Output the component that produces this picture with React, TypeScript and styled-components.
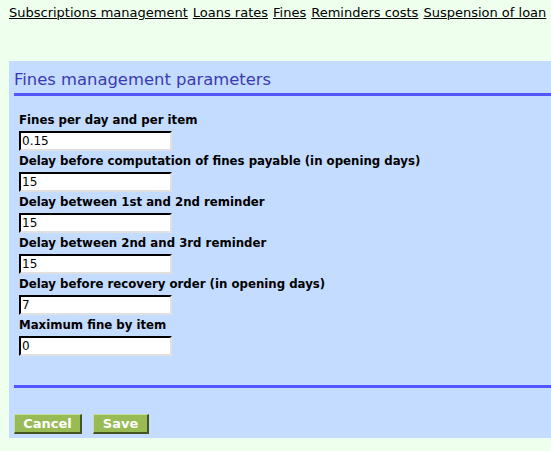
import styled, { createGlobalStyle } from "styled-components"

const GlobalStyle = createGlobalStyle`
	html, body {
		margin: 0;
		padding: 0;
		overflow: hidden;
		background-color: #eeffee;
	}
	body {
		font-family: "DejaVu Sans", Verdana, sans-serif;
	}
`

const Page = styled.div`
	padding: 5px 0 0 9px;
	width: 600px;
`

const Tabs = styled.nav`
	display: flex;
	gap: 5px;
	white-space: nowrap;
	font-size: 13px;
	line-height: 16px;
`

const Tab = styled.a`
	color: black;
	text-decoration: underline;
`

const Panel = styled.form`
	margin-top: 40px;
	background-color: #c4dcff;
	padding: 8px 0 4px 5px;
`

const Title = styled.h2`
	margin: 0;
	color: #3b3bb0;
	font-size: 16.4px;
	font-weight: normal;
	line-height: 22px;
	padding-bottom: 2px;
	border-bottom: 3px solid #5555ff;
`

const Fields = styled.div`
	display: flex;
	flex-direction: column;
	padding: 17px 0 26px 5px;
`

const Label = styled.label`
	font-size: 11.75px;
	font-weight: bold;
	line-height: 15px;
	color: black;
`

const Input = styled.input`
	box-sizing: border-box;
	width: 153px;
	height: 20px;
	margin: 3px 0;
	padding: 1px 1px;
	border: 2px inset #e0e0e0;
	border-top-color: #404040;
	border-left-color: #404040;
	background: white;
	font-family: "DejaVu Sans", Verdana, sans-serif;
	font-size: 12px;
	color: black;
`

const Rule = styled.hr`
	margin: 0;
	border: none;
	border-top: 3px solid #5555ff;
`

const Buttons = styled.div`
	display: flex;
	gap: 11px;
	padding-top: 26px;
`

const Button = styled.button<{ $width: number }>`
	box-sizing: border-box;
	width: ${p => p.$width}px;
	height: 20px;
	padding: 0;
	background-color: #99bb55;
	color: white;
	font-family: "DejaVu Sans", Verdana, sans-serif;
	font-size: 13px;
	font-weight: bold;
	border: 1px solid;
	border-color: #c8dca0 #445522 #445522 #c8dca0;
	border-right-width: 2px;
	border-bottom-width: 2px;
`

const fields = [
	{ label: "Fines per day and per item", value: "0.15" },
	{ label: "Delay before computation of fines payable (in opening days)", value: "15" },
	{ label: "Delay between 1st and 2nd reminder", value: "15" },
	{ label: "Delay between 2nd and 3rd reminder", value: "15" },
	{ label: "Delay before recovery order (in opening days)", value: "7" },
	{ label: "Maximum fine by item", value: "0" },
]

const App = () => {
	return <Page>
		<GlobalStyle />
		<Tabs>
			<Tab href="#">Subscriptions management</Tab>
			<Tab href="#">Loans rates</Tab>
			<Tab href="#">Fines</Tab>
			<Tab href="#">Reminders costs</Tab>
			<Tab href="#">Suspension of loan</Tab>
		</Tabs>
		<Panel onSubmit={e => e.preventDefault()}>
			<Title>Fines management parameters</Title>
			<Fields>
				{fields.map(f => [
					<Label key={f.label + "-label"}>{f.label}</Label>,
					<Input key={f.label + "-input"} defaultValue={f.value} />,
				])}
			</Fields>
			<Rule />
			<Buttons>
				<Button type="button" $width={68}>Cancel</Button>
				<Button type="submit" $width={56}>Save</Button>
			</Buttons>
		</Panel>
	</Page>
}

export default App
